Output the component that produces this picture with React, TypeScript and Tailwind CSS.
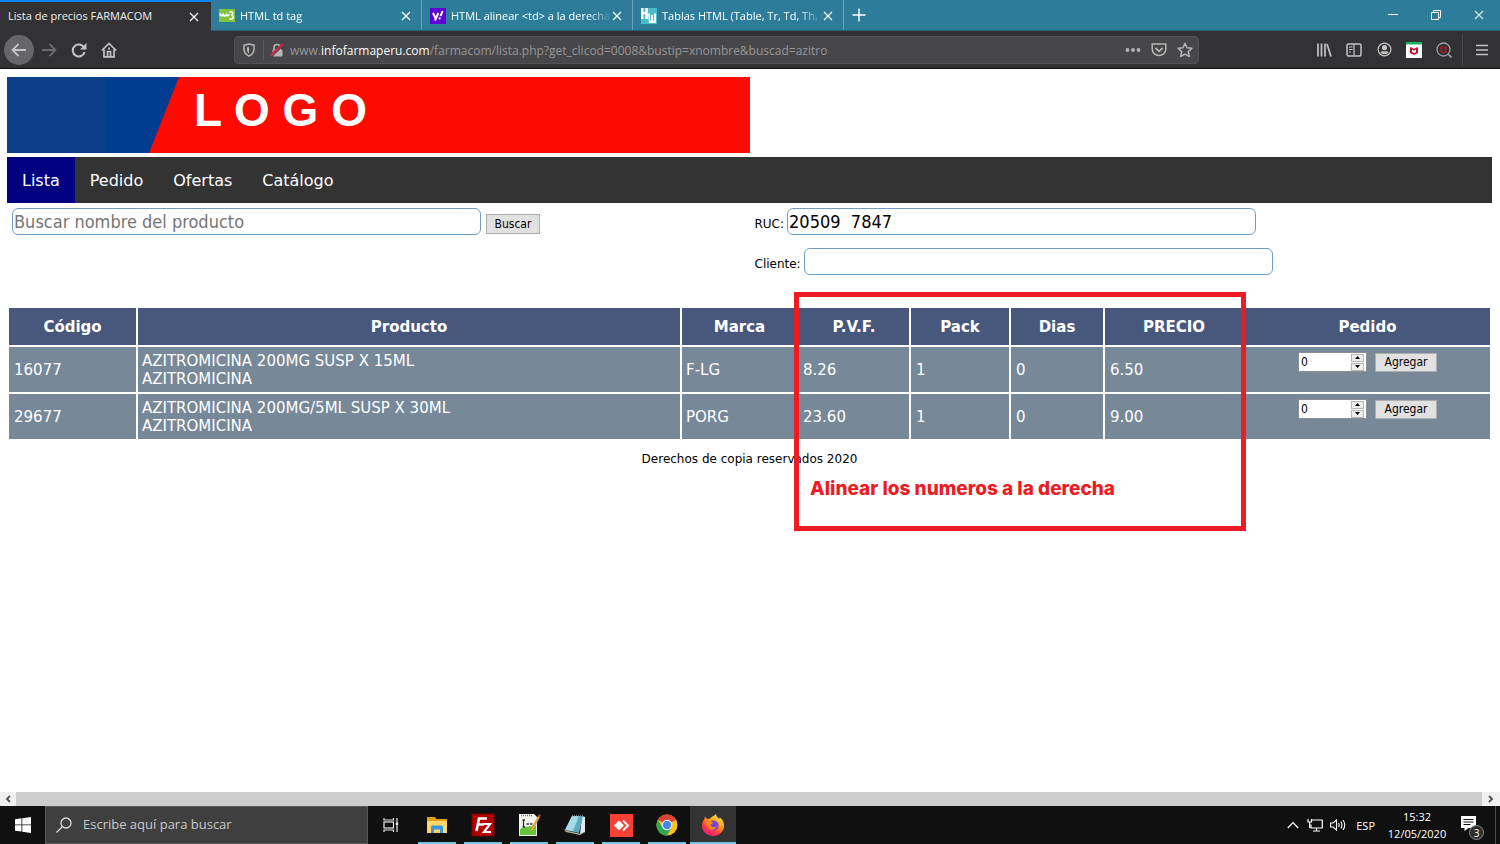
import { useState, type ReactNode } from "react";

const tabs = [
  { title: "HTML td tag", icon: <W3Icon /> },
  { title: "HTML alinear <td> a la derecha", icon: <YahooIcon /> },
  { title: "Tablas HTML (Table, Tr, Td, Th, C", icon: <HwIcon /> },
];

const menu = ["Lista", "Pedido", "Ofertas", "Catálogo"];

const productos = [
  {
    codigo: "16077",
    nombre: "AZITROMICINA 200MG SUSP X 15ML",
    generico: "AZITROMICINA",
    marca: "F-LG",
    pvf: "8.26",
    pack: "1",
    dias: "0",
    precio: "6.50",
  },
  {
    codigo: "29677",
    nombre: "AZITROMICINA 200MG/5ML SUSP X 30ML",
    generico: "AZITROMICINA",
    marca: "PORG",
    pvf: "23.60",
    pack: "1",
    dias: "0",
    precio: "9.00",
  },
];

function W3Icon() {
  return (
    <svg viewBox="0 0 16 16" className="size-4 shrink-0">
      <rect y="1" width="16" height="13" fill="#84c341" />
      <path d="M.8 5.200c.8 3 2.200 3 3.200 1.300 1 2 2.500 2 3.300.2 1 1.500 2.200 1 2.900-.7" fill="none" stroke="#fff" strokeWidth="1.700" />
      <path d="M10.500 4.200c3.600-1.600 4.600 2.600 1.500 3 3.700.4 2.700 5-1.500 3.600" fill="none" stroke="#fff" strokeWidth="1.500" />
    </svg>
  );
}

function YahooIcon() {
  return (
    <svg viewBox="0 0 16 16" className="size-4 shrink-0">
      <rect width="16" height="16" fill="#5f01d1" />
      <path d="M3 5l2.500 5.200M8.300 5L5 12.600" stroke="#fff" strokeWidth="2" />
      <path d="M12.600 3l-2.100 5.200" stroke="#fff" strokeWidth="2" />
      <circle cx="9.600" cy="10.400" r="1.100" fill="#fff" />
    </svg>
  );
}

function HwIcon() {
  return (
    <svg viewBox="0 0 16 16" className="size-4 shrink-0">
      <rect width="16" height="16" fill="#48bccb" />
      <path d="M0 0h2.400v4h2V0h2.400v11H4.400V6.200h-2V11H0z" fill="#fff" />
      <path d="M7 5.600h2v7h1V7h2v5.600h1v-7h2V15H8z" fill="#fff" />
    </svg>
  );
}

function CloseIcon() {
  return (
    <svg viewBox="0 0 10 10" className="size-[10px]">
      <path d="M1 1l8 8M9 1L1 9" stroke="currentColor" strokeWidth="1.200" />
    </svg>
  );
}

function IconButton({ label, className = "", children }: { label: string; className?: string; children: ReactNode }) {
  return (
    <button aria-label={label} className={`flex size-[30px] shrink-0 items-center justify-center text-[#c4c4c5] ${className}`}>
      {children}
    </button>
  );
}

function TabBar() {
  return (
    <div className="flex h-[31px] items-stretch border-b border-[#24607a] bg-[#2d7d9a] text-[11px] text-white">
      <div className="-mb-px flex w-[211px] items-center justify-between border-t-2 border-[#0a84ff] bg-[#323234] pr-3 pl-2">
        <span className="truncate text-[#f0f0f1]">Lista de precios FARMACOM</span>
        <button aria-label="Cerrar pestaña">
          <CloseIcon />
        </button>
      </div>
      {tabs.map((tab) => (
        <div key={tab.title} className="flex w-[211px] items-center border-r border-[#6ba4b8] pt-[2px] pr-[10px] pl-2">
          {tab.icon}
          <span className="ml-[5px] min-w-0 flex-1 overflow-hidden whitespace-nowrap [mask-image:linear-gradient(to_right,black_85%,transparent)]">
            {tab.title}
          </span>
          <button aria-label="Cerrar pestaña">
            <CloseIcon />
          </button>
        </div>
      ))}
      <button aria-label="Nueva pestaña" className="flex w-[30px] items-center justify-center">
        <svg viewBox="0 0 14 14" className="size-[14px]">
          <path d="M7 .5v13M.5 7h13" stroke="currentColor" strokeWidth="1.400" />
        </svg>
      </button>
      <div className="ml-auto flex">
        <button aria-label="Minimizar" className="flex w-[43px] items-center justify-center">
          <svg viewBox="0 0 10 10" className="size-[10px]">
            <path d="M0 4.500h10" stroke="currentColor" />
          </svg>
        </button>
        <button aria-label="Restaurar" className="flex w-[43px] items-center justify-center">
          <svg viewBox="0 0 10 10" className="size-[10px]" fill="none" stroke="currentColor">
            <path d="M.5 2.500h7v7h-7zM2.500 2.500v-2h7v7h-2" />
          </svg>
        </button>
        <button aria-label="Cerrar" className="flex w-[43px] items-center justify-center text-[#d5e5eb]">
          <CloseIcon />
        </button>
      </div>
    </div>
  );
}

function Toolbar() {
  return (
    <div className="flex h-[38px] items-center border-b border-[#0c0c0d] bg-[#323234] pr-[3px] pl-1">
      <IconButton label="Atrás" className="rounded-full bg-[#66666a]">
        <svg viewBox="0 0 16 16" className="size-4" fill="none" stroke="currentColor" strokeWidth="1.800">
          <path d="M15 8H2M7.500 2L1.500 8l6 6" />
        </svg>
      </IconButton>
      <IconButton label="Adelante" className="opacity-40">
        <svg viewBox="0 0 16 16" className="size-4" fill="none" stroke="currentColor" strokeWidth="1.800">
          <path d="M1 8h13M8.500 2l6 6-6 6" />
        </svg>
      </IconButton>
      <IconButton label="Recargar">
        <svg viewBox="0 0 16 16" className="size-4" fill="none" stroke="currentColor" strokeWidth="2">
          <path d="M13 5.500A6 6 0 1 0 13.600 10" />
          <path d="M15.500 1v6.500H9z" fill="currentColor" stroke="none" />
        </svg>
      </IconButton>
      <IconButton label="Inicio">
        <svg viewBox="0 0 16 16" className="size-4" fill="none" stroke="currentColor" strokeWidth="1.700">
          <path d="M.8 8.500L8 1.500l7.200 7M3 7.500v7.300h10V7.500" />
          <path d="M6.500 15V9.500h3V15" />
          <path d="M8 5.500v2" />
        </svg>
      </IconButton>
      <div className="ml-[110px] flex h-7 min-w-0 flex-1 items-center rounded-sm border border-[#525254] bg-[#474749]">
        <button aria-label="Protección" className="flex w-7 justify-center text-[#b6b6b7]">
          <svg viewBox="0 0 14 14" className="size-[14px]" fill="none" stroke="currentColor" strokeWidth="1.500">
            <path d="M7 1l5 1.200v3.800c0 3.500-2 5.700-5 7.200-3-1.500-5-3.700-5-7.200V2.200z" />
            <path d="M7 4v6.500C5.500 9.500 5 8 5 6V4.300z" fill="currentColor" stroke="none" />
          </svg>
        </button>
        <div className="h-5 w-px bg-[#5c5c5f]" />
        <button aria-label="Conexión no segura" className="flex w-[26px] justify-center">
          <svg viewBox="0 0 14 14" className="size-[14px]">
            <path d="M4 7V4.500a3 3 0 0 1 6 0V7" fill="none" stroke="#b6b6b7" strokeWidth="1.700" />
            <rect x="2.500" y="6.500" width="10" height="7" rx="1" fill="#b6b6b7" />
            <path d="M1 13L13 1.500" stroke="#474749" strokeWidth="3" />
            <path d="M.8 12.500L12.800 1" stroke="#e2214b" strokeWidth="1.800" />
          </svg>
        </button>
        <div role="textbox" aria-label="Dirección" className="min-w-0 flex-1 truncate pt-[2px] text-xs text-[#969698]">
          www.<span className="text-[#f9f9fa]">infofarmaperu.com</span>
          /farmacom/lista.php?get_clicod=0008&amp;bustip=xnombre&amp;buscad=azitro
        </div>
        <button aria-label="Acciones de página" className="flex w-[26px] justify-center text-[#b6b6b7]">
          <svg viewBox="0 0 16 16" className="size-4" fill="currentColor">
            <circle cx="2.500" cy="8" r="1.900" />
            <circle cx="8" cy="8" r="1.900" />
            <circle cx="13.500" cy="8" r="1.900" />
          </svg>
        </button>
        <button aria-label="Guardar en Pocket" className="flex w-[26px] justify-center text-[#b6b6b7]">
          <svg viewBox="0 0 16 16" className="size-4" fill="none" stroke="currentColor" strokeWidth="1.500">
            <path d="M1.200 2h13.600v5.200a6.800 6.300 0 0 1-13.600 0z" />
            <path d="M4.500 6L8 9.300 11.500 6" strokeWidth="1.800" />
          </svg>
        </button>
        <button aria-label="Añadir a marcadores" className="flex w-[26px] justify-center text-[#b6b6b7]">
          <svg viewBox="0 0 16 16" className="size-4" fill="none" stroke="currentColor" strokeWidth="1.500" strokeLinejoin="round">
            <path d="M8 1.200l2 4.500 4.900.5-3.600 3.400 1 4.900L8 12.100l-4.300 2.400 1-4.900L1.100 6.200 6 5.700z" />
          </svg>
        </button>
      </div>
      <div className="ml-[110px] flex">
        <IconButton label="Biblioteca">
          <svg viewBox="0 0 16 16" className="size-4" fill="none" stroke="currentColor" strokeWidth="1.700">
            <path d="M2 1.500v13M5.500 1.500v13M9 1.500v13M11 2l4 12.500" />
          </svg>
        </IconButton>
        <IconButton label="Barras laterales">
          <svg viewBox="0 0 16 16" className="size-4" fill="none" stroke="currentColor" strokeWidth="1.500">
            <rect x="1" y="2" width="14" height="12" rx="1.500" />
            <path d="M8 2v12M3 5h3.500M3 7.500h3.500M3 10h2" strokeWidth="1.200" />
          </svg>
        </IconButton>
        <IconButton label="Cuenta">
          <svg viewBox="0 0 16 16" className="size-[15px]">
            <circle cx="8" cy="8" r="6.800" fill="none" stroke="currentColor" strokeWidth="1.300" />
            <circle cx="8" cy="6" r="2.700" fill="currentColor" />
            <path d="M3.500 11.500c1-2 2.500-1.500 4.500-1.500s3.500-.5 4.500 1.500C11 13.500 5 13.500 3.500 11.500z" fill="currentColor" />
          </svg>
        </IconButton>
        <IconButton label="McAfee WebAdvisor">
          <svg viewBox="0 0 16 16" className="size-4">
            <rect width="16" height="16" fill="#fff" />
            <rect width="16" height="2.500" fill="#17b55d" />
            <path d="M4 5l2 .8L8 7l2-1.200L12 5v6l-4 2-4-2z" fill="#c8102e" />
            <path d="M6 7.500l2 1.200 2-1.200V10l-2 1-2-1z" fill="#fff" />
          </svg>
        </IconButton>
        <IconButton label="Búsqueda segura">
          <svg viewBox="0 0 16 16" className="size-4" fill="none">
            <circle cx="7.500" cy="7.500" r="6.500" stroke="#93a1ad" strokeWidth="1.300" />
            <path d="M12 12l3.500 3.500" stroke="#93a1ad" strokeWidth="1.700" />
            <path d="M5 5l2.500 1.200L10 5v4.500L7.500 11 5 9.500z" stroke="#a01c26" strokeWidth="1.500" />
          </svg>
        </IconButton>
      </div>
      <div className="ml-[3px] h-8 w-px bg-[#4b4b4e]" />
      <IconButton label="Menú" className="ml-1">
        <svg viewBox="0 0 12 12" className="size-3">
          <path d="M0 1.500h12M0 6h12M0 10.500h12" stroke="currentColor" strokeWidth="1.400" />
        </svg>
      </IconButton>
    </div>
  );
}

function CantidadInput({ codigo }: { codigo: string }) {
  const [cantidad, setCantidad] = useState(0);

  return (
    <div className="flex h-5 w-[69px] items-center border border-[#8a8f94] bg-white pr-[2px]">
      <input
        type="number"
        aria-label={`Cantidad ${codigo}`}
        value={cantidad}
        onChange={(e) => setCantidad(Number(e.target.value))}
        className="w-full min-w-0 flex-1 pl-[2px] text-[12px] leading-4 text-black outline-none [appearance:textfield] [&::-webkit-inner-spin-button]:appearance-none"
      />
      <div className="flex w-[13px] flex-col gap-px">
        <button
          aria-label="Aumentar"
          onClick={() => setCantidad(cantidad + 1)}
          className="flex h-2 items-center justify-center border border-[#b5b5b5] bg-[#ededed]"
        >
          <svg viewBox="0 0 5 3" className="h-[3px] w-[5px]">
            <path d="M0 3L2.500 0 5 3z" />
          </svg>
        </button>
        <button
          aria-label="Disminuir"
          onClick={() => setCantidad(Math.max(0, cantidad - 1))}
          className="flex h-2 items-center justify-center border border-[#b5b5b5] bg-[#ededed]"
        >
          <svg viewBox="0 0 5 3" className="h-[3px] w-[5px]">
            <path d="M0 0l2.500 3L5 0z" />
          </svg>
        </button>
      </div>
    </div>
  );
}

function TablaProductos() {
  return (
    <table className="w-full table-fixed border-separate border-spacing-[2px] text-[15px] leading-[18px] text-white">
      <colgroup>
        <col className="w-[127px]" />
        <col className="w-[542px]" />
        <col className="w-[115px]" />
        <col className="w-[110px]" />
        <col className="w-[98px]" />
        <col className="w-[92px]" />
        <col className="w-[138px]" />
        <col className="w-[245px]" />
      </colgroup>
      <thead>
        <tr className="h-[37px] bg-[#48587d]">
          <th>Código</th>
          <th>Producto</th>
          <th>Marca</th>
          <th>P.V.F.</th>
          <th>Pack</th>
          <th>Dias</th>
          <th>PRECIO</th>
          <th>Pedido</th>
        </tr>
      </thead>
      <tbody>
        {productos.map((p) => (
          <tr key={p.codigo} className="h-[45px] bg-[#778899]">
            <td className="px-[5px]">{p.codigo}</td>
            <td className="px-1">
              {p.nombre}
              <br />
              {p.generico}
            </td>
            <td className="px-1">{p.marca}</td>
            <td className="px-1">{p.pvf}</td>
            <td className="px-[5px]">{p.pack}</td>
            <td className="px-[5px]">{p.dias}</td>
            <td className="px-[5px]">{p.precio}</td>
            <td className="pt-[5px] align-top">
              <form className="flex items-center justify-center gap-2 font-['DejaVu_Sans_Condensed','DejaVu_Sans',sans-serif]">
                <CantidadInput codigo={p.codigo} />
                <button type="button" className="h-[19px] w-[62px] border border-[#adadad] bg-[#e1e1e1] text-[12px] leading-4 text-black">
                  Agregar
                </button>
              </form>
            </td>
          </tr>
        ))}
      </tbody>
    </table>
  );
}

function Pagina() {
  const campo =
    "h-[27px] w-[469px] rounded-md border border-[#6f9fc8] bg-white px-px text-[18px] leading-6 text-black outline-none placeholder:text-[#757575] font-['DejaVu_Sans_Condensed','DejaVu_Sans',sans-serif]";

  return (
    <main className="flex-1 bg-white pt-2 pr-2 pl-[7px] font-['DejaVu_Sans',Verdana,sans-serif] text-[12px] text-black">
      {/* Cabecera */}
      <div className="relative h-[76px] w-1/2 bg-[#ff0a00]">
        <svg viewBox="0 0 172 76" className="absolute top-0 left-0 h-[76px] w-[172px]">
          <path d="M0 0h172l-30 76H0z" fill="#003c8f" />
          <path d="M0 0h98v76H0z" fill="#0b3f87" />
        </svg>
        <h1 className="pt-[7px] pl-[187px] font-['Liberation_Sans',Arial,sans-serif] text-[46px] leading-[52px] font-bold text-white">
          L O G O
        </h1>
      </div>

      <nav className="mt-1 flex h-[46px] bg-[#333333] text-base text-white">
        {menu.map((item) => (
          <a
            key={item}
            href="#"
            className={`flex items-center px-[15px] pt-[2px] ${item === "Lista" ? "bg-[#000080]" : ""}`}
          >
            {item}
          </a>
        ))}
      </nav>

      {/* Búsqueda y datos del cliente */}
      <div className="grid grid-cols-2 pt-[5px]">
        <form className="flex items-start gap-[5px] pl-[5px]">
          <input type="text" aria-label="Buscar producto" placeholder="Buscar nombre del producto" className={campo} />
          <button
            type="button"
            className="mt-[6px] h-[20px] w-[54px] border border-[#adadad] bg-[#e1e1e1] font-['DejaVu_Sans_Condensed','DejaVu_Sans',sans-serif] text-[12px] leading-4"
          >
            Buscar
          </button>
        </form>
        <div className="flex flex-col gap-[13px] pl-[5px]">
          <label className="flex items-baseline gap-[3px]">
            RUC:
            <input type="text" defaultValue="20509  7847" className={campo} />
          </label>
          <label className="flex items-baseline gap-[3px]">
            Cliente:
            <input type="text" className={campo} />
          </label>
        </div>
      </div>

      <div className="relative mt-[31px]">
        <TablaProductos />
        <p className="mt-[10px] text-center leading-4">Derechos de copia reservados 2020</p>
        {/* Nota sobre las columnas numéricas */}
        <div className="absolute top-[-14px] left-[53%] h-[239px] w-[452px] border-[5px] border-[#ed1c24] pt-[181px] pl-[11px] font-['Inter',sans-serif] text-[19px] leading-[22px] font-extrabold whitespace-nowrap text-[#ed1c24]">
          Alinear los numeros a la derecha
        </div>
      </div>
    </main>
  );
}

function ScrollBar() {
  return (
    <div className="flex h-[14px] bg-[#f0f0f0] text-[#505050]">
      <button aria-label="Desplazar a la izquierda" className="flex w-4 items-center justify-center">
        <svg viewBox="0 0 6 8" className="h-2 w-[6px]">
          <path d="M5 1L2 4l3 3" fill="none" stroke="currentColor" strokeWidth="1.800" />
        </svg>
      </button>
      <div className="flex-1 bg-[#cdcdcd]" />
      <button aria-label="Desplazar a la derecha" className="flex w-[18px] items-center justify-center">
        <svg viewBox="0 0 6 8" className="h-2 w-[6px]">
          <path d="M1 1l3 3-3 3" fill="none" stroke="currentColor" strokeWidth="1.800" />
        </svg>
      </button>
    </div>
  );
}

const apps = [
  {
    name: "Explorador de archivos",
    icon: (
      <svg viewBox="0 0 24 24" className="size-6">
        <path d="M2 4h8l1.500 2H22v14H2z" fill="#e3a21a" />
        <path d="M2 8h20v12H2z" fill="#fcd667" />
        <path d="M6 20v-6a1.500 1.500 0 0 1 1.500-1.500h9A1.500 1.500 0 0 1 18 14v6h-3v-3.500H9V20z" fill="#3a96dd" />
      </svg>
    ),
  },
  {
    name: "FileZilla",
    icon: (
      <svg viewBox="0 0 24 24" className="size-6">
        <rect x="1" y="1" width="22" height="22" fill="#b30000" stroke="#7c0000" />
        <path d="M5.500 18L8 5.500h8M7 11.500h6" fill="none" stroke="#fff" strokeWidth="2.600" />
        <path d="M12.500 11h6.500L13 19h7" fill="none" stroke="#fff" strokeWidth="2.200" />
      </svg>
    ),
  },
  {
    name: "Notepad++",
    icon: (
      <svg viewBox="0 0 24 24" className="size-6">
        <path d="M2 1h15l3 3v19H2z" fill="#f2f4ee" />
        <path d="M3 16c5-3 11-3 16-3v9H3z" fill="#63c33b" />
        <path d="M4 2.500h12" stroke="#777" strokeWidth="1.500" strokeDasharray="1 1" />
        <path d="M6.500 7v7M5.500 7h2.500M5.500 14H8M9.500 11h2.500M13 11h2.500" stroke="#333" strokeWidth="1.300" />
        <path d="M21 3l2 1-7 13-2.500 1.500.5-3z" fill="#e8a33a" />
        <path d="M21 3l2 1 1-2-2-1z" fill="#a93c2c" />
      </svg>
    ),
  },
  {
    name: "Bloc de notas",
    icon: (
      <svg viewBox="0 0 24 24" className="size-6">
        <path d="M19 3l3 1 0 15-5 2z" fill="#e3e9ea" />
        <path d="M9 3l11 0-4 17L2 17z" fill="#5fa9bd" />
        <path d="M9 3l7 0-6 15-8-1z" fill="#a5dbe6" />
        <path d="M1 17l15 3.500 6-1.500-5 3L3 19z" fill="#b9b29a" />
        <path d="M9 2.500h12" stroke="#667" strokeWidth="1.500" strokeDasharray="1 1" />
      </svg>
    ),
  },
  {
    name: "AnyDesk",
    icon: (
      <svg viewBox="0 0 24 24" className="size-6">
        <rect x="1" y="1" width="23" height="23" fill="#fb4135" />
        <path d="M10 7.500l5 5-5 5-5-5z" fill="#fff" />
        <path d="M14 7.500l5 5-5 5" fill="none" stroke="#fff" strokeWidth="1.800" />
      </svg>
    ),
  },
  {
    name: "Chrome",
    icon: (
      <svg viewBox="0 0 24 24" className="size-6">
        <circle cx="12" cy="12" r="10.500" fill="#fbc116" />
        <path d="M12 12L2.900 6.750A10.500 10.500 0 0 1 21.100 6.750H12z" fill="#d94335" />
        <path d="M2.900 6.750A10.500 10.500 0 0 0 12 22.500l4.600-7.900L12 12 7.400 14.600z" fill="#2da94f" />
        <path d="M12 6.750h9.100L12 12z" fill="#d94335" />
        <circle cx="12" cy="12" r="5.200" fill="#fff" />
        <circle cx="12" cy="12" r="4.200" fill="#4285f4" />
      </svg>
    ),
  },
  {
    name: "Firefox",
    active: true,
    icon: (
      <svg viewBox="0 0 24 24" className="size-6">
        <defs>
          <linearGradient id="ff" x1="0.800" y1="0" x2="0.200" y2="1">
            <stop offset="0" stopColor="#fff44f" />
            <stop offset="0.400" stopColor="#ff980e" />
            <stop offset="0.700" stopColor="#ff3647" />
            <stop offset="1" stopColor="#e31587" />
          </linearGradient>
        </defs>
        <path
          d="M15 1c.2 2.500 2 3.500 3.500 5 .2-.8 0-1.500-.2-2 3 2 4.700 5 4.700 8.500A11 10.500 0 0 1 1 13c0-3.200 1-5 2.500-7l.3-2.500L6 6c1-.4 2-.4 3-.2C10 3.500 12.500 3.500 15 1z"
          fill="url(#ff)"
        />
        <circle cx="12.500" cy="12.500" r="5" fill="#7542e5" />
        <path d="M6 9c3-1.500 4-.500 6 .500 0 1-2 1.200-2.500 2.500 1 3 4.500 2.500 6 1-.5 4-6 5-9 1.500C5 12.500 5 10.500 6 9z" fill="#ff8a16" />
      </svg>
    ),
  },
];

function TaskBar() {
  return (
    <footer className="flex h-[38px] bg-[#101010] text-white">
      <button aria-label="Inicio" className="flex w-[45px] items-center justify-center">
        <svg viewBox="0 0 16 16" className="size-4" fill="#fff">
          <path d="M0 2.200l6.500-.9v6.200H0zM7.300 1.200L16 0v7.500H7.300zM0 8.300h6.500v6.300L0 13.700zM7.300 8.300H16V16l-8.700-1.300z" />
        </svg>
      </button>
      <label className="flex w-[323px] items-center border border-[#5a5a5a] bg-[#3f3f3f] pl-[10px]">
        <svg viewBox="0 0 16 16" className="size-4 shrink-0" fill="none" stroke="#dcdcdc" strokeWidth="1.300">
          <circle cx="10" cy="6" r="5" />
          <path d="M6.500 9.500L.500 15.500" />
        </svg>
        <input
          type="text"
          aria-label="Buscar en Windows"
          placeholder="Escribe aquí para buscar"
          className="ml-[11px] min-w-0 flex-1 text-[13px] outline-none placeholder:text-[#c8c8c8]"
        />
      </label>
      <button aria-label="Vista de tareas" className="flex w-[46px] items-center justify-center">
        <svg viewBox="0 0 16 14" className="h-[14px] w-4" fill="none" stroke="#e6e6e6" strokeWidth="1.200">
          <rect x="1" y="4" width="9.500" height="6" />
          <path d="M1 0v2h9.500V0M1 14v-2h9.500v2M14 0v14" />
          <path d="M12.800 4.500h2.400v2.500h-2.400z" fill="#e6e6e6" stroke="none" />
        </svg>
      </button>
      <div className="flex">
        {apps.map((app) => (
          <button
            key={app.name}
            aria-label={app.name}
            className={`flex w-[46px] flex-col items-center justify-between pt-[7px] ${app.active ? "bg-[#333333]" : ""}`}
          >
            {app.icon}
            <span className={`h-[2px] bg-[#72c4e4] ${app.active ? "w-full" : "w-[38px]"}`} />
          </button>
        ))}
      </div>
      <div className="ml-auto flex items-center text-[11px] leading-[17px]">
        <button aria-label="Mostrar iconos ocultos">
          <svg viewBox="0 0 12 8" className="h-2 w-3" fill="none" stroke="currentColor" strokeWidth="1.200">
            <path d="M.8 7L6 1.500 11.200 7" />
          </svg>
        </button>
        <button aria-label="Red" className="ml-2">
          <svg viewBox="0 0 16 14" className="h-[14px] w-4" fill="none" stroke="currentColor" strokeWidth="1.200">
            <path d="M5 2h10.300v8H4V6.500M9.500 10v3M6 13h7" />
            <path d="M1 1v3h3.500V1M2.700 4v6" />
          </svg>
        </button>
        <button aria-label="Volumen" className="ml-[7px]">
          <svg viewBox="0 0 16 14" className="h-[14px] w-4" fill="none" stroke="currentColor" strokeWidth="1.100">
            <path d="M.6 5v4H3l3.500 3V2L3 5zM8.500 5q1.300 2 0 4M10.800 3.500q2.300 3.500 0 7M13 2q3.500 5 0 10" />
          </svg>
        </button>
        <button className="ml-[10px]">ESP</button>
        <button className="ml-3 w-[60px] text-center">
          15:32
          <br />
          12/05/2020
        </button>
        <button aria-label="Notificaciones" className="relative mr-[11px] ml-[13px]">
          <svg viewBox="0 0 24 24" className="size-6">
            <path d="M1 3h15v12H8.500l-4 3v-3H1z" fill="#fff" />
            <path d="M3.500 6.500h10M3.500 9h10M3.500 11.500h7" stroke="#101010" />
          </svg>
          <span className="absolute right-0 bottom-[-3px] flex size-[15px] items-center justify-center rounded-full border border-[#8a8a8a] bg-[#2f2f2f] text-[10px] leading-none">
            3
          </span>
        </button>
        <div className="h-full w-[5px] border-l border-[#4a4a4a]" />
      </div>
    </footer>
  );
}

export default function App() {
  return (
    <div className="flex min-h-screen flex-col font-['Open_Sans','Noto_Sans',sans-serif]">
      <header>
        <TabBar />
        <Toolbar />
      </header>
      <Pagina />
      <ScrollBar />
      <TaskBar />
    </div>
  );
}
